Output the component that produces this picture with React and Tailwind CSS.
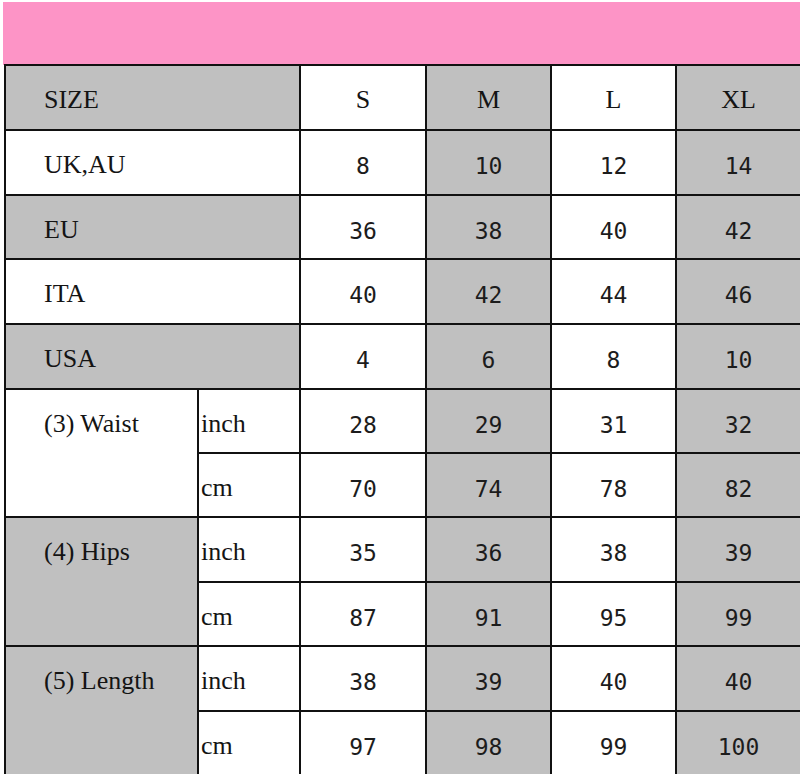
import React from "react";

const sizes = ["S", "M", "L", "XL"];

// simple rows: label spans the first two columns
const simpleRows = [
  { label: "UK,AU", gray: false, values: ["8", "10", "12", "14"] },
  { label: "EU", gray: true, values: ["36", "38", "40", "42"] },
  { label: "ITA", gray: false, values: ["40", "42", "44", "46"] },
  { label: "USA", gray: true, values: ["4", "6", "8", "10"] },
];

// measurement rows: label spans two sub rows (inch / cm)
const measures = [
  { label: "(3) Waist", gray: false, inch: ["28", "29", "31", "32"], cm: ["70", "74", "78", "82"] },
  { label: "(4) Hips", gray: true, inch: ["35", "36", "38", "39"], cm: ["87", "91", "95", "99"] },
  { label: "(5) Length", gray: true, inch: ["38", "39", "40", "40"], cm: ["97", "98", "99", "100"] },
];

const serif = "font-['Liberation_Serif',serif] text-[26px] text-[#141414]";
const mono = "font-['DejaVu_Sans_Mono',monospace] text-[23px] text-[#1c1c1c]";

// M and XL columns are grey
const colBg = (i) => (i % 2 === 1 ? "bg-[#c0c0c0]" : "bg-white");

function ValueCells({ values }) {
  return values.map((v, i) => (
    <div key={i} className={`flex items-center justify-center pt-[8px] ${colBg(i)} ${mono}`}>
      {v}
    </div>
  ));
}

export default function App() {
  return (
    <div className="w-[800px] h-[774px] overflow-hidden bg-white pt-[2px] pl-[3px]">
      {/* Pink header band */}
      <div className="h-[63px] bg-[#fd94c6]" />

      {/* Size chart */}
      <div className="grid w-[900px] bg-[#111] gap-[2px] pl-[2px] pt-[2px] -mt-[1px] ml-[1px] grid-cols-[191px_100px_124px_123px_123px_123px] grid-rows-[63px_63px_62px_63px_63px_62px_62px_63px_62px_63px_62px]">
        {/* Header */}
        <div className={`col-span-2 flex items-center pl-[38px] pt-[4px] bg-[#c0c0c0] ${serif}`}>SIZE</div>
        {sizes.map((s, i) => (
          <div key={s} className={`flex items-center justify-center pt-[4px] ${colBg(i)} ${serif}`}>
            {s}
          </div>
        ))}

        {simpleRows.map((r) => (
          <React.Fragment key={r.label}>
            <div
              className={`col-span-2 flex items-center pl-[38px] pt-[4px] ${r.gray ? "bg-[#c0c0c0]" : "bg-white"} ${serif}`}
            >
              {r.label}
            </div>
            <ValueCells values={r.values} />
          </React.Fragment>
        ))}

        {measures.map((m) => (
          <React.Fragment key={m.label}>
            <div className={`row-span-2 pl-[38px] ${m.gray ? "bg-[#c0c0c0]" : "bg-white"} ${serif}`}>
              <div className="h-[62px] flex items-center pt-[4px]">{m.label}</div>
            </div>
            <div className={`flex items-center pl-[2px] pt-[4px] bg-white ${serif}`}>inch</div>
            <ValueCells values={m.inch} />
            <div className={`flex items-center pl-[2px] pt-[4px] bg-white ${serif}`}>cm</div>
            <ValueCells values={m.cm} />
          </React.Fragment>
        ))}
      </div>
    </div>
  );
}
